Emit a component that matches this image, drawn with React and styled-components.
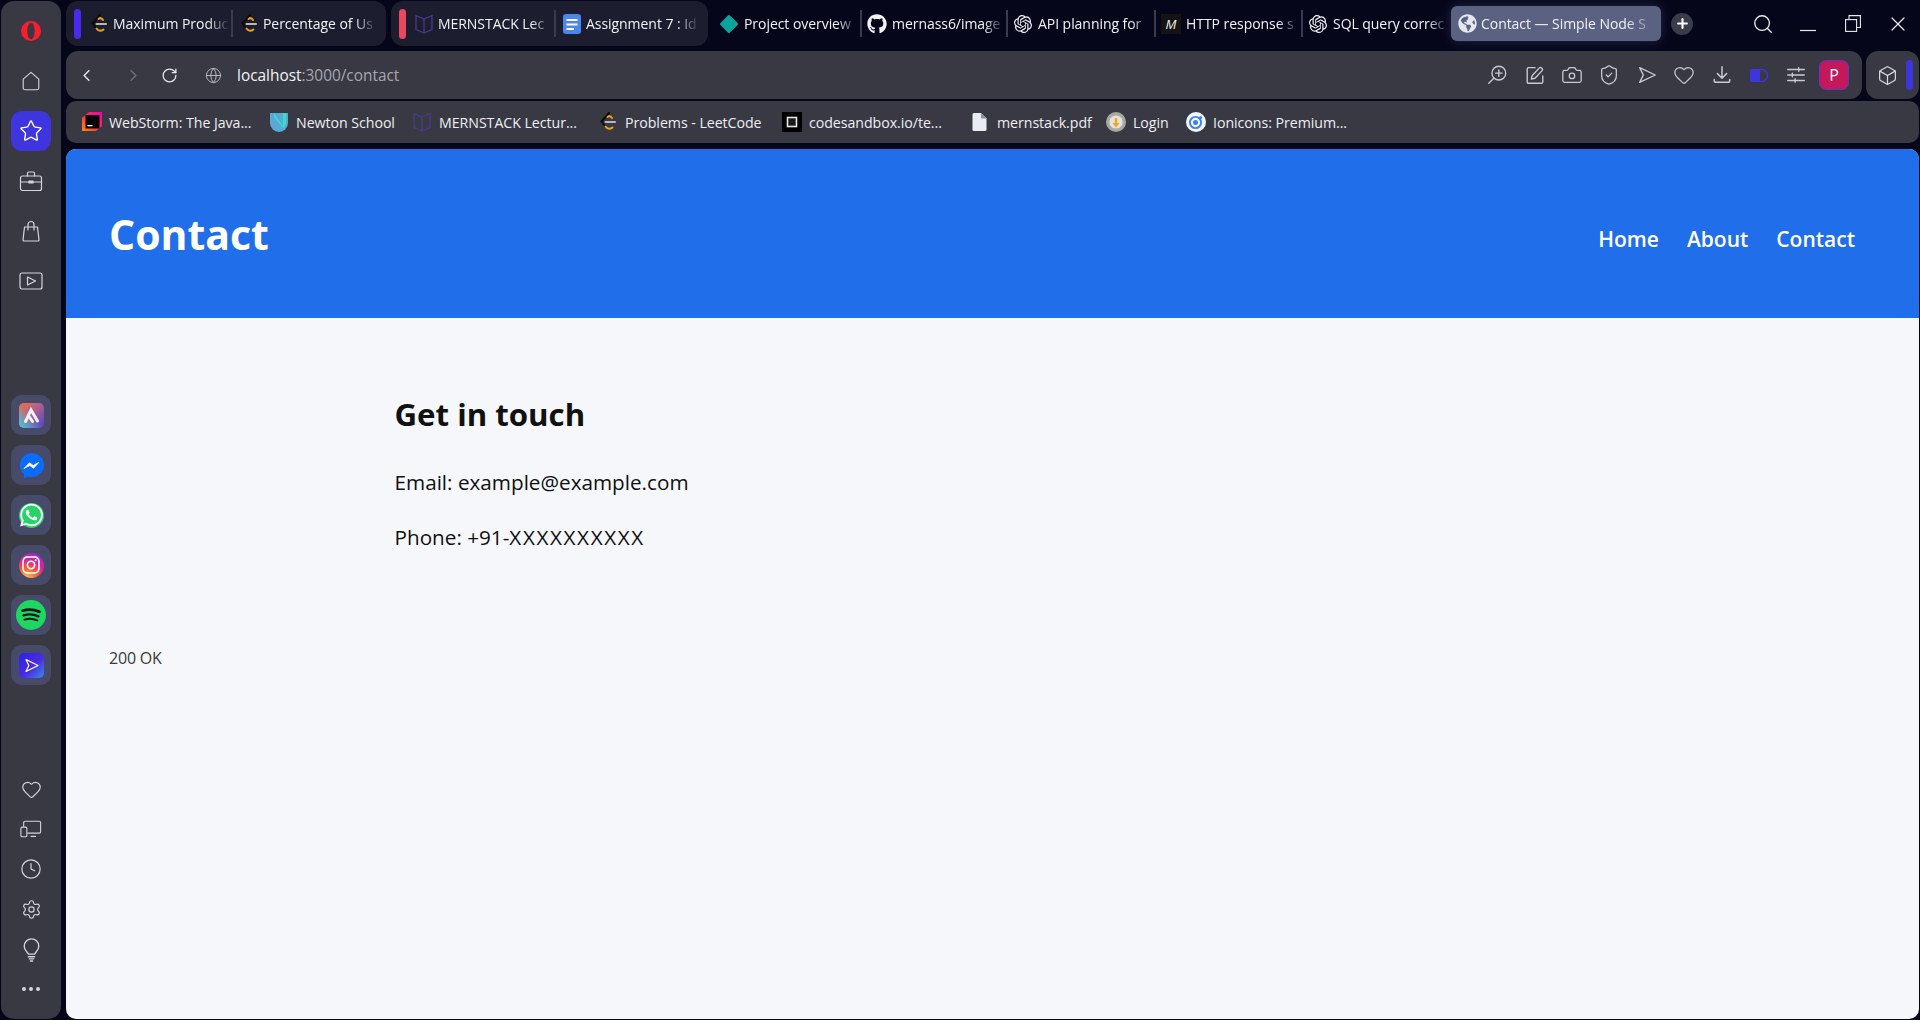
import React from 'react';
import styled, { createGlobalStyle } from 'styled-components';
import { FaGithub, FaWhatsapp, FaInstagram, FaGlobeAmericas } from 'react-icons/fa';
import { SiOpenai } from 'react-icons/si';
import { Star, Heart, Clock, Settings, ShieldCheck, Camera, Box, RotateCw, ChevronLeft, ChevronRight, Globe, Plus, Search, X } from 'lucide-react';

const FONT = '"Open Sans", "Noto Sans", sans-serif';

const GlobalStyle = createGlobalStyle`
  html, body { margin: 0; padding: 0; height: 100%; background: #05061a; }
  #root { height: 100%; }
  * { box-sizing: border-box; }
`;

const Shell = styled.div`
  display: flex;
  width: 1920px;
  height: 1020px;
  overflow: hidden;
  background: #05061a;
  font-family: ${FONT};
`;

/* left opera rail */
const Rail = styled.aside`
  flex: 0 0 60px;
  margin: 1px 5px 1px 1px;
  padding: 10px 0 10px;
  display: flex;
  flex-direction: column;
  align-items: center;
  background: #393944;
  border-radius: 13px;
`;

const RailSlot = styled.div`
  flex: 0 0 ${({ $h }) => $h || 50}px;
  width: 40px;
  display: flex;
  align-items: center;
  justify-content: center;
  padding-bottom: ${({ $h }) => ($h ? 0 : 10)}px;
  color: #d4d5dc;
`;

const PinnedTile = styled.div`
  width: 40px;
  height: 40px;
  border-radius: 11px;
  background: #3e35de;
  color: #fff;
  display: flex;
  align-items: center;
  justify-content: center;
`;

const AppList = styled.div`
  margin-top: 94px;
  display: flex;
  flex-direction: column;
  gap: 10px;
`;

const AppTile = styled.div`
  width: 40px;
  height: 40px;
  border-radius: 11px;
  background: #484a69;
  display: flex;
  align-items: center;
  justify-content: center;
`;

const AppBadge = styled.div`
  width: 25px;
  height: 25px;
  border-radius: 50%;
  background: ${({ $bg }) => $bg};
  color: #fff;
  display: flex;
  align-items: center;
  justify-content: center;
`;

const RailBottom = styled.div`
  margin-top: auto;
  display: flex;
  flex-direction: column;
`;

/* everything right of the rail */
const Main = styled.div`
  flex: 1;
  min-width: 0;
  display: flex;
  flex-direction: column;
  padding: 1px 1px 1px 0;
`;

const TabStrip = styled.div`
  flex: 0 0 45px;
  margin-bottom: 5px;
  display: flex;
  align-items: center;
  gap: 5px;
`;

const TabGroup = styled.div`
  flex: 0 0 auto;
  height: 45px;
  padding: 0 8px;
  display: flex;
  align-items: center;
  background: #1c1e30;
  border-radius: 12px;
`;

const GroupMark = styled.div`
  flex: 0 0 7px;
  height: 30px;
  margin-right: 2px;
  border-radius: 4px;
  background: ${({ $color }) => $color};
`;

const LooseTabs = styled.div`
  flex: 0 0 auto;
  margin-left: 1px;
  display: flex;
  align-items: center;
`;

const Tab = styled.div`
  flex: 0 0 auto;
  width: ${({ $w }) => $w}px;
  height: ${({ $active }) => ($active ? 35 : 27)}px;
  padding-left: ${({ $pad, $active }) => ($active ? 6 : $pad || 5)}px;
  display: flex;
  align-items: center;
  gap: ${({ $pad, $active }) => ($active ? 4 : $pad ? 4 : 5)}px;
  color: #f1f2f6;
  border-right: ${({ $sep }) => ($sep ? '2px solid #3a3c4e' : '0')};
  background: ${({ $active }) => ($active ? '#5b6180' : 'transparent')};
  border-radius: ${({ $active }) => ($active ? '6px' : '0')};
  box-shadow: ${({ $active }) => ($active ? '0 0 12px rgba(120,130,180,.28)' : 'none')};
`;

const TabIcon = styled.div`
  flex: 0 0 20px;
  height: 20px;
  display: flex;
  align-items: center;
  justify-content: center;
`;

const TabTitle = styled.span`
  flex: 1;
  min-width: 0;
  white-space: nowrap;
  font-size: 14px;
  letter-spacing: -0.05px;
  -webkit-mask-image: linear-gradient(to right, #000 80%, transparent 99%);
  mask-image: linear-gradient(to right, #000 80%, transparent 99%);
`;

const MonoMark = styled.span`
  width: 20px;
  height: 20px;
  background: #141414;
  color: #f2f2f2;
  font-size: 13px;
  font-style: italic;
  line-height: 20px;
  text-align: center;
`;

const NewTab = styled.div`
  flex: 0 0 22px;
  height: 22px;
  margin-left: 5px;
  border-radius: 50%;
  background: #3a3c4c;
  color: #fff;
  display: flex;
  align-items: center;
  justify-content: center;
`;

const WindowControls = styled.div`
  margin-left: auto;
  margin-right: -1px;
  display: flex;
  color: #e8e9ee;
`;

const WindowButton = styled.div`
  width: 45px;
  height: 45px;
  display: flex;
  align-items: center;
  justify-content: center;
`;

const ToolRow = styled.div`
  flex: 0 0 48px;
  display: flex;
  gap: 4px;
  margin-bottom: 2px;
`;

const AddressBar = styled.div`
  flex: 1;
  display: flex;
  align-items: center;
  padding: 0 13px 0 10px;
  background: #393944;
  border-radius: 12px;
`;

const NavButton = styled.div`
  flex: 0 0 20px;
  margin-left: ${({ $gap }) => $gap || 0}px;
  height: 20px;
  display: flex;
  align-items: center;
  justify-content: center;
  color: ${({ $tone }) => $tone || '#e6e7ec'};
`;

const Url = styled.div`
  margin-left: 14px;
  font-size: 15.4px;
  color: #a6a7b0;
  b { font-weight: 400; color: #f2f3f6; }
`;

const ToolIcons = styled.div`
  margin-left: auto;
  display: flex;
  align-items: center;
`;

const ToolButton = styled.div`
  flex: 0 0 37.4px;
  display: flex;
  align-items: center;
  justify-content: center;
  color: #c9cad0;
`;

const Avatar = styled.div`
  width: 30px;
  height: 30px;
  margin-left: 4px;
  border-radius: 7px;
  background: #c4175c;
  border: 1px solid #5a3ac0;
  color: #fff;
  font-size: 16px;
  display: flex;
  align-items: center;
  justify-content: center;
`;

const ExtensionBox = styled.div`
  flex: 0 0 53px;
  padding-left: 11px;
  display: flex;
  align-items: center;
  gap: 8px;
  color: #d8d9de;
  background: #393944;
  border-radius: 12px;
`;

const ExtensionMark = styled.div`
  width: 7px;
  height: 30px;
  border-radius: 4px;
  background: #3e35de;
`;

const BookmarkBar = styled.div`
  flex: 0 0 42px;
  margin-bottom: 6px;
  padding-left: 16px;
  display: flex;
  align-items: center;
  background: #393944;
  border-radius: 10px;
`;

const Bookmark = styled.div`
  flex: 0 0 auto;
  width: ${({ $w }) => $w}px;
  display: flex;
  align-items: center;
  gap: 7px;
  font-size: 14.2px;
  letter-spacing: -0.05px;
  color: #eceef2;
  white-space: nowrap;
`;

/* the actual page in the viewport */
const Page = styled.main`
  flex: 1;
  display: flex;
  flex-direction: column;
  background: #f5f7fb;
  border-radius: 10px;
  overflow: hidden;
`;

const Header = styled.header`
  flex: 0 0 169px;
  padding: 0 64px 0 43px;
  display: flex;
  align-items: center;
  justify-content: space-between;
  background: #206eea;
  color: #fff;
`;

const Title = styled.h1`
  margin: 0;
  font-size: 41px;
  line-height: 54px;
  font-weight: 700;
`;

const Nav = styled.nav`
  display: flex;
  gap: 28px;
  margin-top: 10px;
`;

const NavLink = styled.a`
  font-size: 21px;
  font-weight: 600;
  line-height: 30px;
  color: #fff;
`;

const Section = styled.section`
  width: 1196px;
  margin: 0 auto;
  padding-top: 75px;
  color: #111;
`;

const Heading = styled.h2`
  margin: 0 0 32px;
  font-size: 31.2px;
  line-height: 42px;
  font-weight: 700;
`;

const Line = styled.p`
  margin: 0 0 25px;
  font-size: 20.7px;
  line-height: 30px;
`;

const Masked = styled.span`
  letter-spacing: 1.6px;
`;

const Status = styled.div`
  margin: 70px 0 0 43px;
  font-size: 16px;
  line-height: 22px;
  letter-spacing: -0.2px;
  color: #3a3a3a;
`;

/* small drawn icons */
const Line2 = ({ size = 22, w = 1.5, children }) => (
  <svg width={size} height={size} viewBox="0 0 24 24" fill="none" stroke="currentColor" strokeWidth={w} strokeLinecap="round" strokeLinejoin="round">
    {children}
  </svg>
);

const OperaLogo = () => (
  <svg width="20" height="20" viewBox="0 0 20 20">
    <path fillRule="evenodd" fill="#ff1b2d" d="M10 0a10 10 0 1 0 0 20a10 10 0 1 0 0-20zM10 1.8c2.1 0 3.7 3.6 3.7 8.2s-1.6 8.2-3.7 8.2s-3.7-3.6-3.7-8.2s1.6-8.2 3.7-8.2z" />
  </svg>
);

const LeetCode = () => (
  <svg width="20" height="20" viewBox="0 0 20 20" fill="none" strokeWidth="2" strokeLinecap="round" strokeLinejoin="round">
    <path d="M11 1 L3.5 9.5 L7.5 14.5" stroke="#0b0b0b" />
    <path d="M7.5 14.5 Q10.5 18.5 14.5 15.5" stroke="#f2a11c" />
    <path d="M9.5 5 L11 4 Q12.8 4.4 14 6" stroke="#f2a11c" />
    <path d="M7.5 10 H17" stroke="#b8b8b8" />
  </svg>
);

const BookIcon = () => (
  <svg width="20" height="20" viewBox="0 0 20 20" fill="none" stroke="#4d3a8c" strokeWidth="1.3" strokeLinejoin="round">
    <path d="M10 5 L2 1.5 V15.5 L10 19 L18 15.5 V1.5 Z" />
    <path d="M10 5 V19" />
  </svg>
);

const DocsIcon = () => (
  <svg width="20" height="20" viewBox="0 0 20 20">
    <rect x="1" y="0" width="18" height="20" rx="3" fill="#4a86f0" />
    <path d="M4.5 5h11v2h-11zM4.5 9.5h11v2h-11zM4.5 14h7.5v2h-7.5z" fill="#fff" />
  </svg>
);

const Diamond = () => (
  <svg width="20" height="20" viewBox="0 0 20 20">
    <rect x="3.2" y="3.2" width="13.6" height="13.6" rx="1.5" fill="#07a59a" transform="rotate(45 10 10)" />
  </svg>
);

const WebStorm = () => (
  <svg width="20" height="20" viewBox="0 0 20 20">
    <defs>
      <linearGradient id="ws" x1="0" y1="1" x2="1" y2="0">
        <stop offset="0" stopColor="#ff8a00" />
        <stop offset=".5" stopColor="#ff2d55" />
        <stop offset="1" stopColor="#f000b8" />
      </linearGradient>
    </defs>
    <path d="M7 0H20V14L14 19H0V6Z" fill="url(#ws)" />
    <rect x="3.5" y="3" width="14" height="13.5" fill="#050505" />
    <rect x="5.5" y="13" width="5" height="1.3" fill="#fff" />
  </svg>
);

const NewtonIcon = () => (
  <svg width="20" height="20" viewBox="0 0 20 20">
    <path d="M1 1 H19 V11 A9 9 0 0 1 1 11 Z" fill="#5aa8d8" />
    <path d="M5 1 L14 14 V1 H17 V12 A7 7 0 0 1 14 16 L5 5 Z" fill="#39dcc4" />
  </svg>
);

const SandboxIcon = () => (
  <svg width="20" height="20" viewBox="0 0 20 20">
    <rect width="20" height="20" fill="#000" />
    <rect x="5.5" y="5.5" width="9" height="9" fill="#1a1a1a" stroke="#e8e8e8" strokeWidth="1.6" />
  </svg>
);

const FileIcon = () => (
  <svg width="20" height="20" viewBox="0 0 20 20">
    <path d="M4 1 H11 L16.5 6.5 V17.5 A1.5 1.5 0 0 1 15 19 H4 A1.5 1.5 0 0 1 2.5 17.5 V2.5 A1.5 1.5 0 0 1 4 1 Z" fill="#e9edf3" />
    <path d="M11 1 V6.5 H16.5 Z" fill="#8d919b" />
  </svg>
);

const LoginIcon = () => (
  <svg width="20" height="20" viewBox="0 0 20 20">
    <circle cx="10" cy="10" r="10" fill="#a9a9a4" />
    <circle cx="10" cy="10" r="6.6" fill="#e4e3de" />
    <path d="M8.8 6 h2.4 v5 h2.4 L10 15.5 L6.4 11 h2.4 Z" fill="#eda727" />
  </svg>
);

const IoniconsIcon = () => (
  <svg width="20" height="20" viewBox="0 0 20 20">
    <circle cx="10" cy="10" r="10" fill="#f3f7ff" />
    <circle cx="9.5" cy="10.5" r="5.6" fill="none" stroke="#3b82f6" strokeWidth="1.9" />
    <circle cx="9.5" cy="10.5" r="2.5" fill="#3b82f6" />
    <circle cx="14.6" cy="5.4" r="1.5" fill="#3b82f6" />
  </svg>
);

const BriefcaseIcon = () => (
  <Line2 size={24} w={1.2}>
    <rect x="1.5" y="7" width="21" height="14.5" rx="2" />
    <path d="M8.5 7 V4 A1 1 0 0 1 9.5 3 H14.5 A1 1 0 0 1 15.5 4 V7" />
    <path d="M1.5 13 H10 M14 13 H22.5" />
    <rect x="10" y="12" width="4" height="2" fill="currentColor" />
  </Line2>
);

const AriaIcon = () => (
  <svg width="25" height="25" viewBox="0 0 25 25">
    <defs>
      <linearGradient id="aria" x1="0" y1="0" x2="1" y2="1">
        <stop offset="0" stopColor="#f0743c" />
        <stop offset=".45" stopColor="#b3608f" />
        <stop offset="1" stopColor="#4a46c8" />
      </linearGradient>
      <linearGradient id="ariaB" x1="0" y1="1" x2="1" y2="0">
        <stop offset="0" stopColor="#3fd0d8" />
        <stop offset=".5" stopColor="#3fd0d800" />
      </linearGradient>
    </defs>
    <rect width="25" height="25" rx="5" fill="url(#aria)" />
    <rect width="25" height="25" rx="5" fill="url(#ariaB)" />
    <path d="M6.5 18.5 L12 7 L18.5 18 M10.5 14 L13.5 18.5" fill="none" stroke="#f3f3f6" strokeWidth="3" strokeLinecap="round" />
  </svg>
);

const MessengerIcon = () => (
  <svg width="25" height="25" viewBox="0 0 25 25">
    <path d="M12.5 0 A12.5 12 0 0 1 12.5 24 Q10.5 24 8.7 23.4 L5 25 V20.8 A12.5 12 0 0 1 12.5 0 Z" fill="#0a6cff" />
    <path d="M5 15.5 L10.5 9.8 L14.2 12.6 L20 9.2 L14.5 15.2 L10.8 12.4 Z" fill="#fff" stroke="#fff" strokeWidth=".8" strokeLinejoin="round" />
  </svg>
);

const SpotifyIcon = () => (
  <svg width="30" height="30" viewBox="0 0 30 30" fill="none" stroke="#12151a" strokeLinecap="round">
    <circle cx="15" cy="15" r="15" fill="#1ed760" stroke="none" />
    <path d="M6.5 10.7 Q15 8 23.5 11.8" strokeWidth="2.7" />
    <path d="M7.5 15.4 Q15 13 22.5 16.4" strokeWidth="2.3" />
    <path d="M8.5 19.6 Q15 17.6 21.3 20.4" strokeWidth="2" />
  </svg>
);

const PlayerIcon = () => (
  <svg width="25" height="25" viewBox="0 0 25 25">
    <defs>
      <linearGradient id="player" x1="0" y1="0" x2="1" y2="1">
        <stop offset="0" stopColor="#2a22e8" />
        <stop offset=".55" stopColor="#4a2be0" />
        <stop offset="1" stopColor="#3d8bf0" />
      </linearGradient>
    </defs>
    <rect width="25" height="25" rx="5" fill="url(#player)" />
    <path d="M7 6.5 L19 12.5 L7 18.5 L9.8 12.5 Z" fill="none" stroke="#fff" strokeWidth="1.2" strokeLinejoin="round" />
  </svg>
);

const tabsOne = [
  { title: 'Maximum Produc', icon: <LeetCode />, w: 150, sep: true },
  { title: 'Percentage of Us', icon: <LeetCode />, w: 145 },
];

const tabsTwo = [
  { title: 'MERNSTACK Lec', icon: <BookIcon />, w: 148, sep: true },
  { title: 'Assignment 7 : Id', icon: <DocsIcon />, w: 144 },
];

const looseTabs = [
  { title: 'Project overview', icon: <Diamond />, w: 148, sep: true },
  { title: 'mernass6/image', icon: <FaGithub size={20} />, w: 146, sep: true },
  { title: 'API planning for', icon: <SiOpenai size={18} />, w: 148, sep: true },
  { title: 'HTTP response s', icon: <MonoMark>M</MonoMark>, w: 147, sep: true },
  { title: 'SQL query correc', icon: <SiOpenai size={18} />, w: 148 },
];

const bookmarks = [
  { label: 'WebStorm: The Java...', icon: <WebStorm />, w: 187 },
  { label: 'Newton School', icon: <NewtonIcon />, w: 143 },
  { label: 'MERNSTACK Lectur...', icon: <BookIcon />, w: 186 },
  { label: 'Problems - LeetCode', icon: <LeetCode />, w: 184 },
  { label: 'codesandbox.io/te...', icon: <SandboxIcon />, w: 188 },
  { label: 'mernstack.pdf', icon: <FileIcon />, w: 136 },
  { label: 'Login', icon: <LoginIcon />, w: 80 },
  { label: 'Ionicons: Premium...', icon: <IoniconsIcon />, w: 180 },
];

const toolIcons = [
  <Line2 key="zoom">
    <circle cx="14" cy="10" r="7.5" /><path d="M8.5 15.5 L3 21 M14 6.5 V13.5 M10.5 10 H17.5" />
  </Line2>,
  <Line2 key="snap">
    <path d="M12 4 H5 A1.5 1.5 0 0 0 3.5 5.5 V20 A1 1 0 0 0 4.5 21 H19 A1.5 1.5 0 0 0 20.5 19.5 V13" />
    <path d="M8 16.5 L9 12.5 L16.5 4.5 Q18 3 19.5 4.5 Q21 6 19.5 7.5 L12 15.5 Z" />
  </Line2>,
  <Camera key="cam" size={22} strokeWidth={1.4} />,
  <ShieldCheck key="shield" size={22} strokeWidth={1.4} />,
  <Line2 key="send">
    <path d="M4 4 L21 12 L4 20 L8 12 Z" />
  </Line2>,
  <Heart key="heart" size={22} strokeWidth={1.4} />,
  <Line2 key="dl" w={1.6}>
    <path d="M12 3 V15 M7 10.5 L12 15.5 L17 10.5 M3.5 17 V18 A2 2 0 0 0 5.5 20 H18.5 A2 2 0 0 0 20.5 18 V17" />
  </Line2>,
  <svg key="batt" width="18" height="13" viewBox="0 0 18 13">
    <path d="M1.5 0 H10 V13 H1.5 A1.5 1.5 0 0 1 0 11.5 V1.5 A1.5 1.5 0 0 1 1.5 0 Z" fill="#3e35de" />
    <path d="M10 .7 H14 L17.2 4 V9 L14 12.3 H10" fill="none" stroke="#3e35de" strokeWidth="1.3" />
  </svg>,
  <Line2 key="sliders" w={1.5}>
    <path d="M3 6 H21 M3 12 H21 M3 18 H21 M15 4 V8 M8 10 V14 M11 16 V20" />
  </Line2>,
];

const TabItem = ({ tab, pad }) => (
  <Tab $w={tab.w} $sep={tab.sep} $pad={pad}>
    <TabIcon>{tab.icon}</TabIcon>
    <TabTitle>{tab.title}</TabTitle>
  </Tab>
);

const App = () => {
  return (
    <Shell>
      <GlobalStyle />
      <Rail>
        <RailSlot><OperaLogo /></RailSlot>
        <RailSlot>
          <Line2 size={22} w={1.2}>
            <path d="M12 2.5 L20.5 10 V19.5 A2 2 0 0 1 18.5 21.5 H5.5 A2 2 0 0 1 3.5 19.5 V10 Z" />
          </Line2>
        </RailSlot>
        <RailSlot>
          <PinnedTile><Star size={24} strokeWidth={1.4} /></PinnedTile>
        </RailSlot>
        <RailSlot><BriefcaseIcon /></RailSlot>
        <RailSlot>
          <Line2 size={24} w={1.2}>
            <path d="M5.5 8 H18.5 L20 21 A1 1 0 0 1 19 22 H5 A1 1 0 0 1 4 21 Z" />
            <path d="M9 11 V5.5 A3 3 0 0 1 15 5.5 V11" />
          </Line2>
        </RailSlot>
        <RailSlot $h={40}>
          <Line2 size={24} w={1.2}>
            <rect x="1" y="4" width="22" height="16" rx="2" />
            <path d="M8.5 8 L16.5 12 L8.5 16 Z" />
          </Line2>
        </RailSlot>

        <AppList>
          <AppTile><AriaIcon /></AppTile>
          <AppTile><MessengerIcon /></AppTile>
          <AppTile>
            <AppBadge $bg="#25d366"><FaWhatsapp size={26} /></AppBadge>
          </AppTile>
          <AppTile>
            <AppBadge $bg="radial-gradient(circle at 30% 105%, #ffd25a 0%, #f9602d 35%, #d6249f 62%, #7a2ee0 100%)">
              <FaInstagram size={20} />
            </AppBadge>
          </AppTile>
          <AppTile><SpotifyIcon /></AppTile>
          <AppTile><PlayerIcon /></AppTile>
        </AppList>

        <RailBottom>
          <RailSlot $h={40}><Heart size={21} strokeWidth={1.3} /></RailSlot>
          <RailSlot $h={40}>
            <Line2 size={22} w={1.2}>
              <path d="M4 9 V5 A1.5 1.5 0 0 1 5.5 3.5 H21 A1.5 1.5 0 0 1 22.5 5 V15 A1.5 1.5 0 0 1 21 16.5 H8.5 M12 20 H17" />
              <rect x="1" y="10" width="6.5" height="10.5" rx="1.5" />
            </Line2>
          </RailSlot>
          <RailSlot $h={40}><Clock size={22} strokeWidth={1.3} /></RailSlot>
          <RailSlot $h={40}><Settings size={21} strokeWidth={1.3} /></RailSlot>
          <RailSlot $h={40}>
            <Line2 size={25} w={1.3}>
              <path d="M9 16.5 C8.5 14.5 5 13 5 8.8 A7 7 0 0 1 19 8.8 C19 13 15.5 14.5 15 16.5 Z" />
              <path d="M9 19 H15 M10 21 H14 M11 23 H13" />
            </Line2>
          </RailSlot>
          <RailSlot $h={40}>
            <svg width="18" height="4" viewBox="0 0 18 4" fill="currentColor">
              <circle cx="2" cy="2" r="2" /><circle cx="9" cy="2" r="2" /><circle cx="16" cy="2" r="2" />
            </svg>
          </RailSlot>
        </RailBottom>
      </Rail>

      <Main>
        <TabStrip>
          <TabGroup>
            <GroupMark $color="#4d28f0" />
            {tabsOne.map((t) => <TabItem key={t.title} tab={t} pad={6} />)}
          </TabGroup>
          <TabGroup>
            <GroupMark $color="#e9495f" />
            {tabsTwo.map((t) => <TabItem key={t.title} tab={t} pad={6} />)}
          </TabGroup>
          <LooseTabs>
            {looseTabs.map((t) => <TabItem key={t.title} tab={t} />)}
            <Tab $w={210} $active>
              <TabIcon><FaGlobeAmericas size={19} color="#e4e6f0" /></TabIcon>
              <TabTitle>Contact — Simple Node S</TabTitle>
            </Tab>
          </LooseTabs>
          <NewTab><Plus size={15} strokeWidth={3.4} /></NewTab>
          <WindowControls>
            <WindowButton><Search size={22} strokeWidth={1.5} /></WindowButton>
            <WindowButton>
              <svg width="16" height="16" viewBox="0 0 16 16"><path d="M0 14.5 H16" stroke="currentColor" strokeWidth="1.2" /></svg>
            </WindowButton>
            <WindowButton>
              <svg width="16" height="17" viewBox="0 0 16 17" fill="none" stroke="currentColor" strokeWidth="1.1">
                <rect x=".6" y="4.6" width="11" height="11.8" /><path d="M4 4.5 V.6 H15.4 V12.5 H11.6" />
              </svg>
            </WindowButton>
            <WindowButton><X size={24} strokeWidth={1.2} /></WindowButton>
          </WindowControls>
        </TabStrip>

        <ToolRow>
          <AddressBar>
            <NavButton><ChevronLeft size={19} strokeWidth={1.8} /></NavButton>
            <NavButton $gap={27} $tone="#71727c"><ChevronRight size={19} strokeWidth={1.6} /></NavButton>
            <NavButton $gap={16}><RotateCw size={17} strokeWidth={1.8} /></NavButton>
            <NavButton $gap={24} $tone="#c9cad0"><Globe size={17} strokeWidth={1.2} /></NavButton>
            <Url><b>localhost</b>:3000/contact</Url>
            <ToolIcons>
              {toolIcons.map((icon, i) => (
                <ToolButton key={i}>{icon}</ToolButton>
              ))}
              <Avatar>P</Avatar>
            </ToolIcons>
          </AddressBar>
          <ExtensionBox>
            <Box size={21} strokeWidth={1.4} />
            <ExtensionMark />
          </ExtensionBox>
        </ToolRow>

        <BookmarkBar>
          {bookmarks.map((b) => (
            <Bookmark key={b.label} $w={b.w}>
              {b.icon}
              <span>{b.label}</span>
            </Bookmark>
          ))}
        </BookmarkBar>

        <Page>
          <Header>
            <Title>Contact</Title>
            <Nav>
              <NavLink>Home</NavLink>
              <NavLink>About</NavLink>
              <NavLink>Contact</NavLink>
            </Nav>
          </Header>
          <Section>
            <Heading>Get in touch</Heading>
            <Line>Email: example@example.com</Line>
            <Line>Phone: +91-<Masked>XXXXXXXXXX</Masked></Line>
          </Section>
          <Status>200 OK</Status>
        </Page>
      </Main>
    </Shell>
  );
};

export default App;
